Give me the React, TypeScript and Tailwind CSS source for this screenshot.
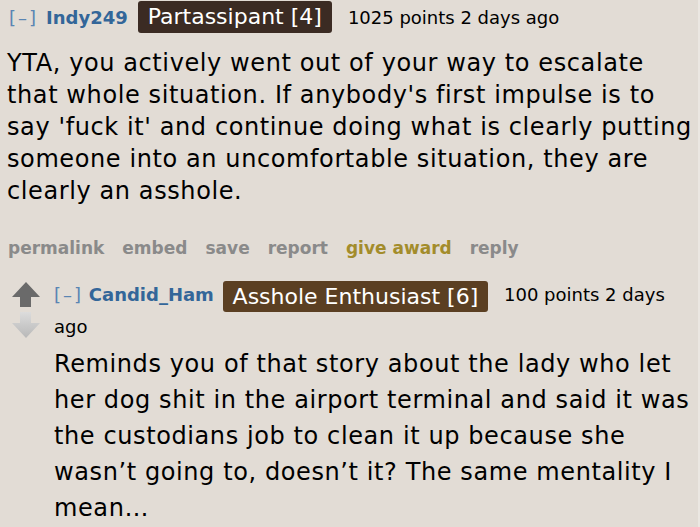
import React from "react";

function UpArrow() {
  return (
    <svg width="30" height="26" viewBox="0 0 30 26">
      <path d="M15 0 L29 15 L20 15 L20 25 L9 25 L9 15 L1 15 Z" fill="#6a6a6a" />
    </svg>
  );
}

function DownArrow() {
  return (
    <svg width="30" height="27" viewBox="0 0 30 27">
      <defs>
        <linearGradient id="dg" x1="0" y1="0" x2="0" y2="1">
          <stop offset="0" stopColor="#dcdcdc" />
          <stop offset="1" stopColor="#b8b8b8" />
        </linearGradient>
      </defs>
      <path d="M9 0 L20 0 L20 11 L29 11 L15 26 L1 11 L9 11 Z" fill="url(#dg)" />
    </svg>
  );
}

const actions = ["permalink", "embed", "save", "report", "give award", "reply"];

export default function App() {
  return (
    <div className="h-[527px] w-[700px] overflow-hidden border-r-2 border-[#ebe7e2] bg-[#e2dcd5] font-['DejaVu_Sans',Verdana,sans-serif] text-black">
      <div className="flex items-center pl-[9px] pt-[1px]">
        <span className="text-[18px] tracking-[2px] text-[#5a85b3]">[–]</span>
        <span className="ml-[8px] text-[18px] font-bold text-[#336699]">Indy249</span>
        <span className="ml-[10px] rounded-[3px] bg-[#3b2b23] px-[10px] text-[22px] leading-[32px] text-white">
          Partassipant [4]
        </span>
        <span className="ml-[16px] text-[18px]">1025 points 2 days ago</span>
      </div>

      <p className="mt-[14px] pl-[7px] text-[24px] leading-[32px] tracking-[0.6px]">
        YTA, you actively went out of your way to escalate that whole situation. If anybody's first impulse is
        to say 'fuck it' and continue doing what is clearly putting someone into an uncomfortable situation,
        they are clearly an asshole.
      </p>

      <div className="mt-[30px] flex gap-[18px] pl-[8px] text-[17px] font-bold leading-[22px] text-[#8a8a8a]">
        {actions.map((a) => (
          <span key={a} className={a === "give award" ? "text-[#a38c2b]" : ""}>
            {a}
          </span>
        ))}
      </div>

      <div className="mt-[20px] flex">
        <div className="flex w-[54px] flex-col items-center gap-[4px] pt-[3px] pr-[3px]">
          <UpArrow />
          <DownArrow />
        </div>
        <div className="flex-1">
          <div className="pt-[1px] text-[18px] leading-[29px]">
            <span className="tracking-[2px] text-[#5a85b3]">[–]</span>{" "}
            <span className="font-bold text-[#336699]">Candid_Ham</span>{" "}
            <span className="ml-[3px] mr-[10px] inline-block rounded-[3px] bg-[#5b3f22] px-[10px] align-middle text-[22px] leading-[31px] text-white">
              Asshole Enthusiast [6]
            </span>{" "}
            <span>100 points 2 days</span> <span>ago</span>
          </div>
          <p className="mt-[5px] text-[24px] leading-[36px] tracking-[0.6px]">
            Reminds you of that story about the lady who let her dog shit in the airport terminal and said it was
            the custodians job to clean it up because she wasn’t going to, doesn’t it? The same mentality I
            mean…
          </p>
        </div>
      </div>
    </div>
  );
}
